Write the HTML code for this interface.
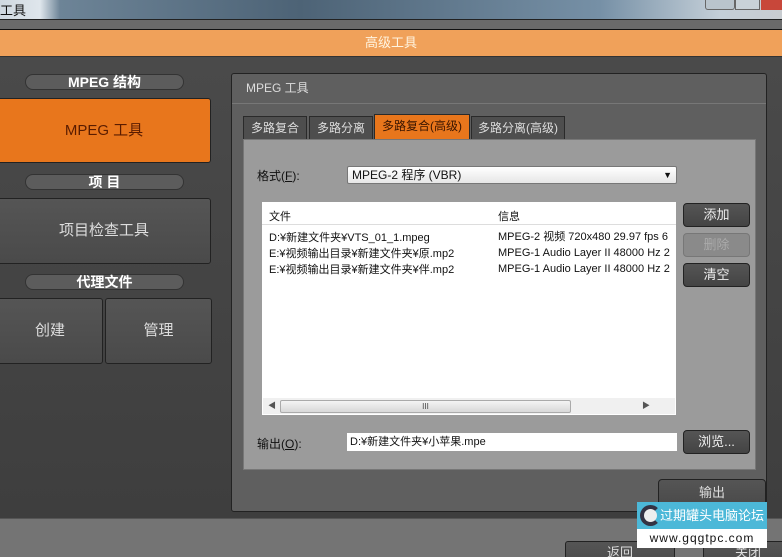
<!DOCTYPE html>
<html style="width:782px;height:557px;overflow:hidden"><head><meta charset="utf-8"><style>
*{box-sizing:border-box;margin:0;padding:0}
body{width:782px;height:557px;overflow:hidden;background:#454545;font-family:"Liberation Sans","Noto Sans CJK SC",sans-serif;position:relative;font-size:12px}
.a{position:absolute}
.pill{position:absolute;left:25px;width:159px;height:16px;border-radius:8px;background:#5c5c5c;border:1px solid #333;color:#fff;font-weight:bold;font-size:14px;text-align:center;line-height:14px}
.btn{position:absolute;background:linear-gradient(#555,#4a4a4a);border:1px solid #222;border-radius:3px;color:#ddd;font-size:15px;text-align:center}
.sb{position:absolute;left:683px;width:67px;height:24px;border-radius:4px;background:linear-gradient(#555,#444);border:1px solid #222;color:#eee;text-align:center;line-height:22px;font-size:13px}
.tab{position:absolute;top:116px;height:23px;background:#4e4e4e;border:1px solid #2a2a2a;border-bottom:none;color:#ddd;font-size:12px;line-height:22px;text-align:center}
.row{position:absolute;font-size:11px;color:#111;white-space:nowrap}
</style></head><body>
<div class="a" style="left:0;top:0;width:782px;height:19px;background:linear-gradient(90deg,#cfd8e0 0,#dfe6ec 40px,#6d8497 60px,#4d6376 300px,#7690a6 600px,#c4cfd8 720px,#c8ccd0 782px)"></div>
<div class="a" style="left:0;top:0;font-size:13px;color:#111">工具</div>
<div class="a" style="left:705px;top:0;width:30px;height:10px;border:1px solid #666;border-top:none;border-radius:0 0 3px 3px;background:#b9c4cc"></div>
<div class="a" style="left:735px;top:0;width:25px;height:10px;border:1px solid #666;border-top:none;background:#c9d2d8"></div>
<div class="a" style="left:761px;top:0;width:21px;height:10px;background:#c8473a"></div>
<div class="a" style="left:0;top:19px;width:782px;height:10px;background:#6a6a6a;border-top:1px solid #222"></div>
<div class="a" style="left:0;top:29px;width:782px;height:28px;background:#f0a15a;border-top:1px solid #111;border-bottom:1px solid #333;color:#fff4e0;text-align:center;line-height:26px;font-size:13px">高级工具</div>
<div class="a" style="left:0;top:57px;width:782px;height:461px;background:linear-gradient(#4a4a4a,#3e3e3e)"></div>

<div class="pill" style="top:74px">MPEG 结构</div>
<div class="btn" style="left:-3px;top:98px;width:214px;height:65px;background:#e8761c;color:#5a1c00;line-height:63px">MPEG 工具</div>
<div class="pill" style="top:174px">项 目</div>
<div class="btn" style="left:-3px;top:198px;width:214px;height:66px;line-height:64px">项目检查工具</div>
<div class="pill" style="top:274px">代理文件</div>
<div class="btn" style="left:-3px;top:298px;width:106px;height:66px;line-height:64px">创建</div>
<div class="btn" style="left:105px;top:298px;width:107px;height:66px;line-height:64px">管理</div>

<div class="a" style="left:231px;top:73px;width:536px;height:439px;background:#5f5f5f;border:1px solid #222;border-radius:3px"></div>
<div class="a" style="left:232px;top:74px;width:534px;height:30px;border-bottom:1px solid #777;color:#ddd;font-size:12px;line-height:28px;padding-left:14px">MPEG 工具</div>
<div class="tab" style="left:243px;width:64px">多路复合</div>
<div class="tab" style="left:309px;width:64px">多路分离</div>
<div class="tab" style="left:374px;width:96px;top:114px;height:25px;background:#e8761c;color:#3a1500">多路复合(高级)</div>
<div class="tab" style="left:471px;width:94px">多路分离(高级)</div>
<div class="a" style="left:243px;top:139px;width:513px;height:331px;background:#9b9b9b;border:1px solid #777"></div>
<div class="a" style="left:257px;top:167px;font-size:12px;color:#111">格式(<u>F</u>):</div>
<div class="a" style="left:347px;top:166px;width:330px;height:18px;background:linear-gradient(#fff,#e6e6e6);border:1px solid #777;border-radius:2px;font-size:12px;line-height:16px;padding-left:4px;color:#111">MPEG-2 程序 (VBR)<span style="position:absolute;right:4px;top:0;font-size:9px">▼</span></div>
<div class="a" style="left:262px;top:202px;width:414px;height:213px;background:#fff"></div>
<div class="row" style="left:269px;top:208px">文件</div><div class="row" style="left:498px;top:208px">信息</div>
<div class="a" style="left:262px;top:224px;width:414px;height:1px;background:#ddd"></div>
<div class="row" style="left:269px;top:229px">D:¥新建文件夹¥VTS_01_1.mpeg</div>
<div class="row" style="left:269px;top:245px">E:¥视频输出目录¥新建文件夹¥原.mp2</div>
<div class="row" style="left:269px;top:261px">E:¥视频输出目录¥新建文件夹¥伴.mp2</div>
<div class="a" style="left:498px;top:229px;width:178px;height:50px;overflow:hidden;font-size:11px;color:#111;line-height:16px;white-space:nowrap">MPEG-2 视频 720x480 29.97 fps 6<br>MPEG-1 Audio Layer II 48000 Hz 2<br>MPEG-1 Audio Layer II 48000 Hz 2</div>
<div class="a" style="left:263px;top:398px;width:412px;height:16px;background:#f0f0f0"></div>
<div class="a" style="left:280px;top:400px;width:291px;height:13px;background:linear-gradient(#f4f4f4,#d8d8d8);border:1px solid #aaa;border-radius:2px;text-align:center;font-size:8px;line-height:11px;color:#444">III</div>
<div class="a" style="left:268px;top:400px;font-size:8px;color:#555">◀</div>
<div class="a" style="left:642px;top:400px;font-size:8px;color:#555">▶</div>
<div class="sb" style="top:203px">添加</div>
<div class="sb" style="top:233px;background:#8a8a8a;border-color:#777;color:#aaa">删除</div>
<div class="sb" style="top:263px">清空</div>
<div class="a" style="left:257px;top:435px;font-size:12px;color:#111">输出(<u>O</u>):</div>
<div class="a" style="left:347px;top:433px;width:330px;height:18px;background:#fff;font-size:11px;line-height:18px;padding-left:3px;color:#111">D:¥新建文件夹¥小苹果.mpe</div>
<div class="sb" style="top:430px">浏览...</div>
<div class="btn" style="left:658px;top:479px;width:108px;height:28px;line-height:26px;font-size:13px;border-radius:4px">输出</div>

<div class="a" style="left:0;top:518px;width:782px;height:39px;background:#747474;border-top:1px solid #555"></div>
<div class="btn" style="left:565px;top:541px;width:110px;height:24px;font-size:13px;line-height:22px">返回</div>
<div class="btn" style="left:703px;top:541px;width:90px;height:24px;font-size:13px;line-height:22px">关闭</div>
<div class="a" style="left:637px;top:502px;width:130px;height:27px;background:#4cb8d8;color:#fff;font-size:13px;line-height:27px;padding-left:23px;white-space:nowrap">过期罐头电脑论坛</div>
<div class="a" style="left:640px;top:505px;width:21px;height:21px;border-radius:50%;border:4px solid #334;border-right-color:#4cb8d8;background:#eee"></div>
<div class="a" style="left:637px;top:529px;width:130px;height:19px;background:#fff;color:#111;font-size:12px;line-height:19px;text-align:center;letter-spacing:1px">www.gqgtpc.com</div>
</body></html>
